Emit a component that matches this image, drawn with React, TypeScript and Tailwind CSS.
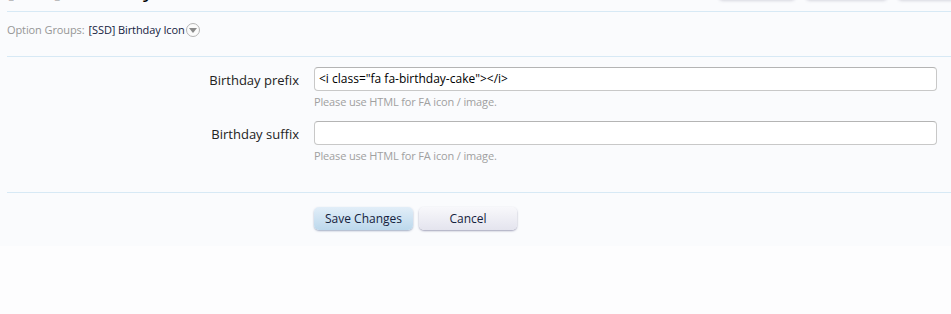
import React from "react";

const font = { fontFamily: '"Open Sans", "Liberation Sans", sans-serif' };

export default function App() {
  return (
    <div className="w-[951px] h-[314px] overflow-hidden bg-[#fdfdfe] text-[13px] text-[#000]" style={font}>
      <div className="bg-[#fafbfd] h-[246px]">
        {/* header (cut off) */}
        <div className="relative h-[11px] pl-[7px]">
          <div className="absolute left-[7px] top-[-26px] text-[22px] leading-[28px] text-black">[SSD] Birthday Icon</div>
          <div className="absolute top-[-24px] left-[718px] flex gap-[9px]">
            <div className="w-[78px] h-[24px] rounded-[5px] bg-[#f7f8fb] shadow-[0_1px_3px_rgba(150,150,170,0.35)]" />
            <div className="w-[83px] h-[24px] rounded-[5px] bg-[#f7f8fb] shadow-[0_1px_3px_rgba(150,150,170,0.35)]" />
            <div className="w-[83px] h-[24px] rounded-[5px] bg-[#f7f8fb] shadow-[0_1px_3px_rgba(150,150,170,0.35)]" />
          </div>
        </div>
        <div className="ml-[7px] border-t border-[#d7e9f5]" />
        <div className="flex items-start h-[44px] pl-[7px] text-[11px] pt-[10px] tracking-[-0.1px]">
          <span className="text-[#969696]">Option Groups:</span>
          <span className="ml-[4px] text-[#14213d]">[SSD] Birthday Icon</span>
          <span className="ml-[1px] mt-[1px] w-[14px] h-[14px] rounded-full border border-[#b5b5b5] bg-[#fbfbfb] flex items-center justify-center">
            <svg width="8" height="5" viewBox="0 0 8 5"><path d="M0 0 L8 0 L4 5 Z" fill="#8a8a8a" /></svg>
          </span>
        </div>
        <div className="ml-[7px] border-t border-[#d7e9f5]" />

        <div className="pt-[10px]">
          <div className="flex">
            <div className="w-[299px] text-right pt-[4px] text-[13px] text-[#222]">Birthday prefix</div>
            <div className="ml-[15px] flex flex-col">
              <div className="w-[623px] h-[24px] rounded-[4px] border border-[#c8c8c8] border-t-[#b4b4b4] bg-white px-[4px] flex items-center text-[12px] text-black">
                &lt;i class="fa fa-birthday-cake"&gt;&lt;/i&gt;
              </div>
              <div className="text-[11px] tracking-[-0.15px] text-[#a0a0a0] mt-[3px] leading-[16px]">Please use HTML for FA icon / image.</div>
            </div>
          </div>
          <div className="flex mt-[11px]">
            <div className="w-[299px] text-right pt-[4px] text-[13px] text-[#222]">Birthday suffix</div>
            <div className="ml-[15px] flex flex-col">
              <div className="w-[623px] h-[24px] rounded-[4px] border border-[#c8c8c8] border-t-[#b4b4b4] bg-white" />
              <div className="text-[11px] tracking-[-0.15px] text-[#a0a0a0] mt-[3px] leading-[16px]">Please use HTML for FA icon / image.</div>
            </div>
          </div>
        </div>

        <div className="ml-[7px] mt-[28px] border-t border-[#d7e9f5]" />

        <div className="flex pl-[314px] pt-[14px] gap-[6px]">
          <button className="w-[99px] h-[23px] rounded-[5px] text-[12px] text-[#14213d] bg-gradient-to-b from-[#e2eef8] to-[#bcd8ec] shadow-[0_1px_2px_rgba(90,110,150,0.55)]" style={font}>Save Changes</button>
          <button className="w-[98px] h-[23px] rounded-[5px] text-[12px] text-[#14213d] bg-gradient-to-b from-[#f8f8fb] to-[#e4e4ee] shadow-[0_1px_2px_rgba(90,90,130,0.55)]" style={font}>Cancel</button>
        </div>
      </div>
    </div>
  );
}
